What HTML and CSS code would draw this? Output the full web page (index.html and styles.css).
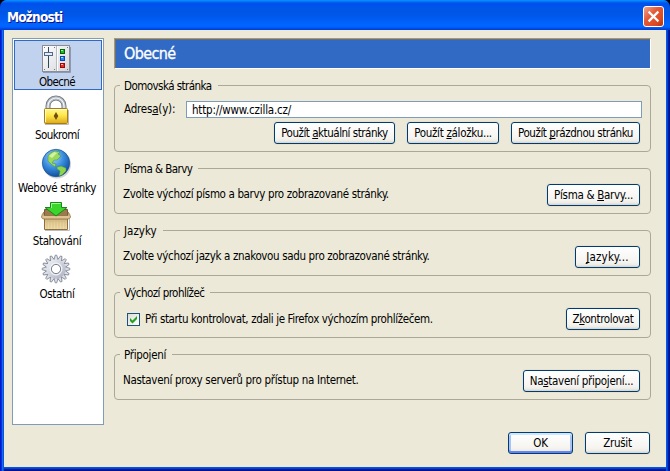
FILE: index.html
```html
<!DOCTYPE html>
<html lang="cs">
<head>
<meta charset="utf-8">
<title>Možnosti</title>
<link rel="stylesheet" href="styles.css">
</head>
<body>
<div class="window">
  <header class="titlebar">
    <h1 class="title">Možnosti</h1>
    <button class="close" aria-label="Zavřít"><svg viewBox="0 0 21 21"><path d="M6 6l9 9M15 6l-9 9" stroke="#fff" stroke-width="2.500" stroke-linecap="square"/></svg></button>
  </header>
  <div class="body">
    <nav class="sidebar">
      <div class="item selected">
        <svg class="icon" viewBox="0 0 32 32">
          <defs><linearGradient id="pl" x1="0" y1="0" x2="1" y2="1"><stop offset="0" stop-color="#fff"/><stop offset="1" stop-color="#d4d6db"/></linearGradient></defs>
          <path d="M3 30.500H30.500V5" stroke="#8d9ab5" fill="none"/>
          <rect x="2.500" y="3.500" width="27" height="26" fill="url(#pl)" stroke="#8b8e96"/>
          <path d="M16.500 4V29" stroke="#b7bac1"/><path d="M17.500 4V29" stroke="#fff"/>
          <path d="M8.500 5V26" stroke="#33445b"/>
          <rect x="4.500" y="10.500" width="8" height="3" fill="#e4ecf7" stroke="#53698a"/>
          <path d="M4 5.500h1M14 5.500h1M4 27.500h1M14 27.500h1M27 5.500h1M27 27.500h1" stroke="#777"/>
          <rect x="20.500" y="7.500" width="4" height="4" fill="#10c315" stroke="#06600a"/>
          <rect x="20.500" y="14.500" width="4" height="4" fill="#288bf4" stroke="#0948a8"/>
          <rect x="20.500" y="21.500" width="4" height="4" fill="#ee2920" stroke="#9d0808"/>
          <path d="M21 8.500h2M21 15.500h2M21 22.500h2" stroke="#fff" opacity=".7"/>
        </svg>
        <span class="label l1">Obecné</span>
      </div>
      <div class="item">
        <svg class="icon" viewBox="0 0 32 32">
          <defs><linearGradient id="lk" x1="0" y1="0" x2="0" y2="1"><stop offset="0" stop-color="#fff79b"/><stop offset=".45" stop-color="#ffe84b"/><stop offset="1" stop-color="#dda91b"/></linearGradient></defs>
          <path d="M5 29.500H28.500V15" stroke="#bbb" fill="none"/>
          <path d="M8 14V11a8 8 0 0 1 16 0V14" fill="none" stroke="#707780" stroke-width="5"/>
          <path d="M8 14V11a8 8 0 0 1 16 0V14" fill="none" stroke="#b4bbc3" stroke-width="3.400"/>
          <path d="M8 14V11a8 8 0 0 1 16 0V14" fill="none" stroke="#f6f8fa" stroke-width="1.200"/>
          <rect x="4.500" y="13.500" width="23" height="15" rx="1" fill="url(#lk)" stroke="#a77c12"/>
          <path d="M5.500 27V14.500H26.500" stroke="#fffbd0" fill="none"/>
          <path d="M16 17l2.300 4-2.300 4-2.300-4z" fill="#704b12"/>
        </svg>
        <span class="label l2">Soukromí</span>
      </div>
      <div class="item">
        <svg class="icon" viewBox="0 0 32 32">
          <defs><radialGradient id="gl" cx=".4" cy=".3" r=".75"><stop offset="0" stop-color="#a5d6fb"/><stop offset=".5" stop-color="#3a8dde"/><stop offset="1" stop-color="#0b4697"/></radialGradient></defs>
          <circle cx="17" cy="16.500" r="14" fill="#aaa" opacity=".5"/>
          <circle cx="16" cy="15" r="13.700" fill="url(#gl)" stroke="#175197" stroke-width=".7"/>
          <path d="M8 8Q10 4 15 3L20 4 18 6 21 8 17 12 14 12 12 15 16 16 15 19 11 16 8 13z" fill="#9bdb5c" stroke="#438c40" stroke-width=".5"/>
          <path d="M17 19L21 18 26 20 26 23 22 27 19 28 20 23 17 21z" fill="#8fd450" stroke="#438c40" stroke-width=".5"/>
          <path d="M9 8l5-4 3 1-5 5z" fill="#e2f7b9" opacity=".8"/>
        </svg>
        <span class="label l3">Webové stránky</span>
      </div>
      <div class="item">
        <svg class="icon" viewBox="0 0 32 32">
          <defs><linearGradient id="bx" x1="0" y1="0" x2="0" y2="1"><stop offset="0" stop-color="#c9ac74"/><stop offset=".4" stop-color="#e3cc96"/><stop offset="1" stop-color="#f3dfac"/></linearGradient></defs>
          <path d="M5 29.500H29.500V18" stroke="#bbb" fill="none"/>
          <path d="M4.500 8.500h23V18h-23z" fill="#9b7a4e" stroke="#74573a"/>
          <path d="M4.500 17.500h23v11h-23z" fill="url(#bx)" stroke="#8c6d3e"/>
          <path d="M7 20v8M10 20v8M13 20v8M16 20v8M19 20v8M22 20v8M25 20v8" stroke="#ceb37c" opacity=".5"/>
          <path d="M4 11Q2 13 1.500 16Q2 18 4 18H28Q30 18 30.500 16Q30 13 28 11V14.500H4z" fill="#dfc393" stroke="#8c6d3e" stroke-width=".8"/>
          <path d="M10.500 1.500H21.500V6.500H27L16 15 5 6.500H10.500z" fill="#3bd62b" stroke="#158b17"/>
          <path d="M11.500 7V2.500H20.500" stroke="#a5f892" fill="none"/>
        </svg>
        <span class="label l4">Stahování</span>
      </div>
      <div class="item">
        <svg class="icon" viewBox="0 0 32 32">
          <defs>
            <linearGradient id="gr" x1="0" y1="0" x2="1" y2="1"><stop offset="0" stop-color="#e9ebf1"/><stop offset="1" stop-color="#b4b9c6"/></linearGradient>
            <path id="tooth" d="M13.700 7L15.200 1.200H16.800L18.300 7" fill="#dcdfe7" stroke="#7b8190" stroke-width=".8"/>
            <g id="quad"><use href="#tooth"/><use href="#tooth" transform="rotate(22.500 16 15)"/><use href="#tooth" transform="rotate(45 16 15)"/><use href="#tooth" transform="rotate(67.500 16 15)"/></g>
          </defs>
          <use href="#quad"/><use href="#quad" transform="rotate(90 16 15)"/><use href="#quad" transform="rotate(180 16 15)"/><use href="#quad" transform="rotate(270 16 15)"/>
          <circle cx="16" cy="15" r="6.800" fill="none" stroke="url(#gr)" stroke-width="6"/>
          <circle cx="16" cy="15" r="5.800" fill="none" stroke="#f2f3f6" stroke-width="1.200"/>
          <circle cx="16" cy="15" r="4.600" fill="#fff" stroke="#7b8190"/>
        </svg>
        <span class="label l5">Ostatní</span>
      </div>
    </nav>
    <main class="main">
      <h2 class="heading"><span>Obecné</span></h2>
      <fieldset class="group home">
        <legend><span class="g1">Domovská stránka</span></legend>
        <div class="address"><label class="t1">Adres<u>a</u>(y):</label><div class="field"><span class="t2">http://www.czilla.cz/</span></div></div>
        <div class="row buttons">
          <button class="btn b1">Použít <u>a</u>ktuální stránky</button>
          <button class="btn b2">Použít <u>z</u>áložku...</button>
          <button class="btn b3">Použít <u>p</u>rázdnou stránku</button>
        </div>
      </fieldset>
      <fieldset class="group">
        <legend><span class="g2">Písma &amp; Barvy</span></legend>
        <div class="row"><span class="text t3">Zvolte výchozí písmo a barvy pro zobrazované stránky.</span><button class="btn b4">Písma &amp; <u>B</u>arvy...</button></div>
      </fieldset>
      <fieldset class="group">
        <legend><span class="g3">Jazyky</span></legend>
        <div class="row"><span class="text t4">Zvolte výchozí jazyk a znakovou sadu pro zobrazované stránky.</span><button class="btn b5"><u>J</u>azyky...</button></div>
      </fieldset>
      <fieldset class="group">
        <legend><span class="g4">Výchozí prohlížeč</span></legend>
        <div class="row"><label class="check"><i class="box"><svg viewBox="0 0 11 11"><path d="M2 4v3l2.500 2.500L9 5V2L4.500 6.500z" fill="#21a121"/></svg></i><span class="t5">Při startu kontrolovat, zdali je Firefox výchozím prohlížečem.</span></label><button class="btn b6">Z<u>k</u>ontrolovat</button></div>
      </fieldset>
      <fieldset class="group">
        <legend><span class="g5">Připojení</span></legend>
        <div class="row"><span class="text t6">Nastavení proxy serverů pro přístup na Internet.</span><button class="btn b7">Na<u>s</u>tavení připojení...</button></div>
      </fieldset>
      <footer class="footer"><button class="btn ok">OK</button><button class="btn cancel">Zrušit</button></footer>
    </main>
  </div>
</div>
</body>
</html>
```
FILE: styles.css
```css
* { box-sizing: border-box; }
body {
  margin: 0;
  background: #000;
  font: 11.5px/13px "DejaVu Sans Condensed", "DejaVu Sans", sans-serif;
  font-stretch: condensed;
  letter-spacing: -.36px;
  color: #000;
}
u { text-underline-offset: 1px; text-decoration-thickness: 1px; text-decoration-skip-ink: none; }
.window {
  width: 670px;
  height: 471px;
  border-radius: 7px 7px 0 0;
  overflow: hidden;
  background: linear-gradient(90deg, #0019cf 0 1px, #0831d9 1px 2px, #166aee 2px 3px, #0855dd 3px 4px, transparent 4px 666px, #0855dd 666px 667px, #0441d8 667px 668px, #001da0 668px 669px, #00138c 669px), linear-gradient(#0855dd 0 467px, #0855dd 467px 468px, #0441d8 468px 469px, #001da0 469px 470px, #00138c 470px);
}
.titlebar {
  height: 30px;
  display: flex;
  justify-content: space-between;
  align-items: flex-start;
  padding: 6px 6px 0 7px;
  background: linear-gradient(#0997ff 0, #0053ee 3px, #0050ee 5px, #0058e6 9px, #0055e5 12px, #005af0 18px, #0066ff 25px, #0062ff 27px, #0046d9 29px, #003dd7 30px);
}
.title {
  margin: 2px 0 0;
  font: bold 13.5px/18px "DejaVu Sans Condensed", sans-serif;
  font-stretch: condensed;
  letter-spacing: -.8px;
  color: #fff;
  text-shadow: 1px 1px #0f1089;
}
.close {
  width: 21px;
  height: 21px;
  padding: 0;
  border: 1px solid #fff;
  border-radius: 3px;
  background: linear-gradient(135deg, #f0a48c, #e3593a 40%, #dd4a20 75%, #b83208);
}
.close svg { display: block; width: 19px; height: 19px; }
.body {
  display: flex;
  gap: 10px;
  height: 437px;
  margin: 0 4px;
  padding: 8px 15px 0 8px;
  background: #ece9d8;
}
.sidebar {
  width: 92px;
  height: 387px;
  padding: 1px;
  border: 1px solid #7f9db9;
  background: #fff;
}
.item {
  display: flex;
  flex-direction: column;
  align-items: center;
  height: 50px;
  margin-bottom: 3px;
  padding-top: 1px;
  border: 1px solid transparent;
}
.selected { background: #c1d2ee; border-color: #316ac5; }
.icon { width: 32px; height: 32px; flex: none; margin-right: 4px; }
.label { white-space: nowrap; line-height: 16px; margin-right: 2px; }
.l1, .l2 { letter-spacing: -.6px; }
.l3, .l4 { letter-spacing: -.36px; }
.main { width: 537px; }
.heading {
  height: 31px;
  margin: 0 0 10px;
  padding: 0 9px;
  border: 1px solid;
  border-color: #9d9a8b #fff #fff #9d9a8b;
  box-shadow: inset 1px 1px #716f64;
  background: #316ac5;
  color: #fff;
  font: 16px/29px "DejaVu Sans Condensed", sans-serif;
  font-stretch: condensed;
  letter-spacing: -.6px;
  -webkit-text-stroke: .3px #fff;
}
.group {
  display: block;
  height: 52px;
  min-width: 0;
  margin: 0 0 10px;
  padding: 9px 10px 0 9px;
  border: 1px solid #aca899;
  border-radius: 4px;
}
.group.home { height: 73px; padding-right: 8px; }
legend { height: 13px; line-height: 15px; margin-left: -4px; padding: 0 6px 0 4px; white-space: nowrap; }
.g1, .g2, .g4 { letter-spacing: -.55px; }
.g3 { letter-spacing: 0; }
.g5 { letter-spacing: -.3px; }
.row { display: flex; align-items: center; justify-content: space-between; height: 22px; white-space: nowrap; }
.text { padding-bottom: 1px; margin-left: -1px; }
.t5 { letter-spacing: -.39px; }
.t6 { letter-spacing: -.3px; }
.address { display: flex; align-items: center; justify-content: space-between; white-space: nowrap; }
.t1, .t2 { letter-spacing: -.2px; }
.field { width: 456px; height: 17px; padding-left: 5px; border: 1px solid #7f9db9; background: #fff; line-height: 16px; }
.buttons { justify-content: flex-end; gap: 12px; margin: 4px 2px 0 0; }
.btn {
  flex: none;
  height: 22px;
  padding: 0;
  border: 1px solid #003c74;
  border-radius: 3px;
  background: linear-gradient(#fff, #f5f4f0 75%, #ecebe5 90%, #d6d0c5);
  box-shadow: 0 0 0 1px #e4e2d2, 0 1px #f6f5ee;
  font: inherit;
  letter-spacing: -.3px;
  color: #000;
  white-space: nowrap;
}
.b1 { width: 121px; letter-spacing: -.48px; }
.b2 { width: 92px; }
.b3 { width: 129px; letter-spacing: -.44px; }
.b4 { width: 93px; }
.b5 { width: 65px; letter-spacing: .2px; }
.b6 { width: 74px; letter-spacing: -.4px; }
.b7 { width: 117px; }
.check { display: flex; align-items: center; gap: 5px; padding-left: 3px; }
.box { width: 13px; height: 13px; border: 1px solid #1c5180; background: linear-gradient(135deg, #dcdcd7, #fff); }
.box svg { display: block; width: 11px; height: 11px; }
.footer { display: flex; justify-content: flex-end; gap: 12px; padding: 22px 1px 0 0; }
.ok, .cancel { width: 65px; }
.ok { box-shadow: inset 0 2px #cee7ff, inset 0 -2px #6982ee, inset 2px 0 #a9c4f4, inset -2px 0 #a9c4f4; }
```
